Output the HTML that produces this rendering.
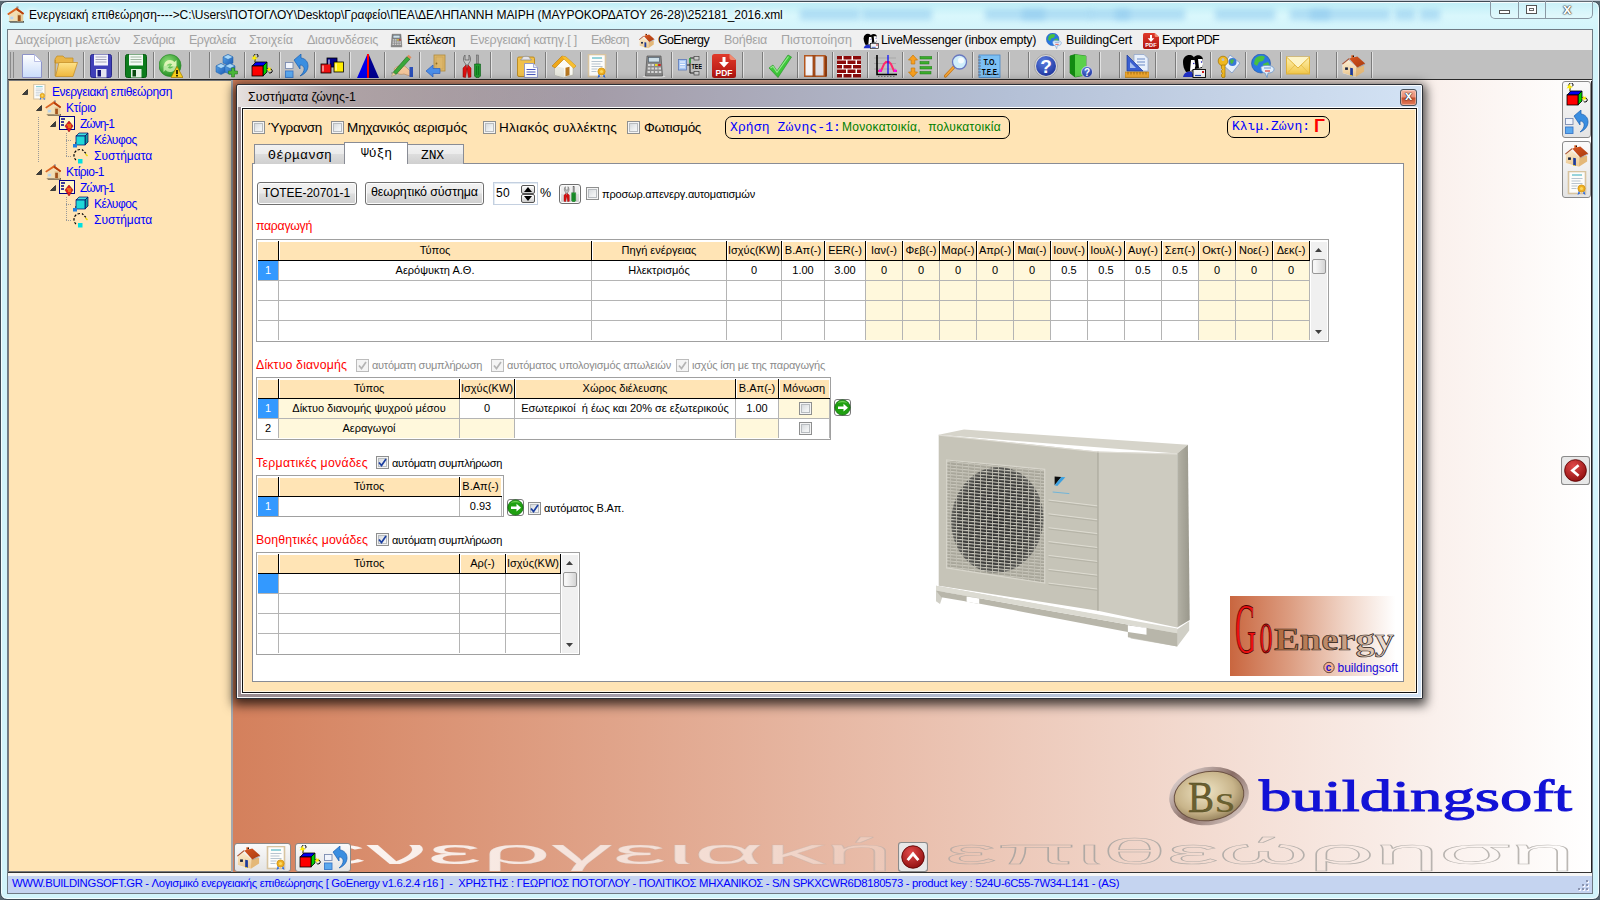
<!DOCTYPE html>
<html lang="el"><head><meta charset="utf-8"><title>Ενεργειακή επιθεώρηση</title>
<style>html,body{margin:0;padding:0}
body{width:1600px;height:900px;position:relative;overflow:hidden;background:#5a6872;font-family:"Liberation Sans",sans-serif;font-size:12px;color:#000;line-height:1}
.a,.a *{position:absolute;box-sizing:border-box}
.t{white-space:pre;line-height:1}
.sep{top:52px;width:1px;height:26px;background:#7c7c7c;box-shadow:1px 0 0 #e2e2e2}
.cb{width:13px;height:13px;border:1px solid #8e8f8f;background:linear-gradient(135deg,#cdd1d5 0%,#eef0f1 60%,#fafafa 100%);box-shadow:inset 0 0 0 1px #f4f4f4,inset 0 0 0 2px #b8bcc0}
.cbd{width:13px;height:13px;border:1px solid #bcbcbc;background:#f4f4f4}
.btn{border:1px solid #707070;border-radius:3px;background:linear-gradient(#f2f2f2 0%,#ebebeb 48%,#dddddd 52%,#cfcfcf 100%);box-shadow:inset 0 0 0 1px #fcfcfc}
.tbl{border:1px solid #a0a0a0;background:#fff}
</style></head><body>
<svg class="a" width="0" height="0" style="left:0;top:0"><defs>
<linearGradient id="gdoc" x1="0" y1="0" x2="0" y2="1"><stop offset="0" stop-color="#fff"/><stop offset="1" stop-color="#c9dcfa"/></linearGradient>
<linearGradient id="gfold" x1="0" y1="0" x2="0" y2="1"><stop offset="0" stop-color="#fde28a"/><stop offset="1" stop-color="#f0b73c"/></linearGradient>
<radialGradient id="ggreen" cx=".4" cy=".35" r=".7"><stop offset="0" stop-color="#8fe07a"/><stop offset="1" stop-color="#1e8a1e"/></radialGradient>
<radialGradient id="gblue" cx=".4" cy=".3" r=".8"><stop offset="0" stop-color="#5a7ee0"/><stop offset="1" stop-color="#1a2f9a"/></radialGradient>
<radialGradient id="gred" cx=".4" cy=".3" r=".8"><stop offset="0" stop-color="#e04a4a"/><stop offset="1" stop-color="#8a0a0a"/></radialGradient>
<linearGradient id="gcube" x1="0" y1="0" x2="1" y2="1"><stop offset="0" stop-color="#5aa8ec"/><stop offset="1" stop-color="#1a58b0"/></linearGradient>
<linearGradient id="gmail" x1="0" y1="0" x2="0" y2="1"><stop offset="0" stop-color="#fdf0b0"/><stop offset="1" stop-color="#f2c84a"/></linearGradient>
<linearGradient id="gpdf" x1="0" y1="0" x2="0" y2="1"><stop offset="0" stop-color="#e03a2a"/><stop offset="1" stop-color="#b01410"/></linearGradient>
<symbol id="i-new" viewBox="0 0 24 24"><path d="M.5 .5h12l7 7v16h-19z" fill="url(#gdoc)" stroke="#8d93c8"/><path d="M12.500 .5v7h7z" fill="#fff" stroke="#a9b0dd" stroke-width=".8"/></symbol>
<symbol id="i-open" viewBox="0 0 24 24"><path d="M1 5l2-3h6l2 2h8v5H1z" fill="#e9b548" stroke="#c08a20" stroke-width=".7"/><path d="M1.500 22.500L5 8.500h18.500L19 22.500z" fill="url(#gfold)" stroke="#c8922a" stroke-width=".8"/><path d="M1.200 22V6" stroke="#c08a20" stroke-width=".9"/></symbol>
<symbol id="i-save" viewBox="0 0 24 24"><rect x="1.500" y=".5" width="21" height="23" rx="2" fill="#4040b8" stroke="#2a2a8a"/><rect x="5" y=".5" width="14" height="11" fill="#f4f4fb"/><path d="M6.500 3h11M6.500 5.500h11M6.500 8h11" stroke="#9a9ab0" stroke-width=".9"/><rect x="7" y="15" width="10.500" height="8.500" fill="#e4e4f0"/><rect x="8.500" y="16" width="3.500" height="6.500" fill="#15157a"/></symbol>
<symbol id="i-saveg" viewBox="0 0 24 24"><rect x="1.500" y=".5" width="21" height="23" rx="2" fill="#0c7c1c" stroke="#085a12"/><rect x="5" y=".5" width="14" height="11" fill="#f4fbf4"/><path d="M6.500 3h11M6.500 5.500h11M6.500 8h11" stroke="#9ab09a" stroke-width=".9"/><rect x="7" y="15" width="10.500" height="8.500" fill="#e4f0e4"/><rect x="8.500" y="16" width="3.500" height="6.500" fill="#0a4a10"/></symbol>
<symbol id="i-refresh" viewBox="0 0 24 24"><circle cx="11" cy="11.500" r="11" fill="url(#ggreen)" stroke="#2a8a2a" stroke-width=".7"/><path d="M5 12a6 6 0 0 1 10.500-4l2-2v6.500h-6.500l2.200-2.200A3.600 3.600 0 0 0 7.500 12z" fill="#e9f7c0" opacity=".9"/><path d="M17 12a6 6 0 0 1-10.500 4l-2 2v-6.500h6.500l-2.200 2.200A3.600 3.600 0 0 0 14.500 12z" fill="#c9efb0" opacity=".85"/><path d="M18 12.500l6 11H12z" fill="#f6cf1a" stroke="#a07a00" stroke-width=".7"/><path d="M18 16v4" stroke="#000" stroke-width="1.600"/><circle cx="18" cy="21.700" r=".9"/></symbol>
<symbol id="i-cubes" viewBox="0 0 24 24"><g stroke="#1f5fa8" stroke-width=".5"><path d="M8 3l5-2.500L18 3v6l-5 2.500L8 9z" fill="url(#gcube)"/><path d="M8 3l5 2.500L18 3l-5-2.500z" fill="#a9d8f8"/><path d="M1 12l5-2.500L11 12v6l-5 2.500L1 18z" fill="url(#gcube)"/><path d="M1 12l5 2.500L11 12l-5-2.500z" fill="#a9d8f8"/><path d="M10 12l5-2.500L20 12v6l-5 2.500L10 18z" fill="url(#gcube)"/><path d="M10 12l5 2.500L20 12l-5-2.500z" fill="#a9d8f8"/></g><path d="M17 14.500h3v-3h3v3h3v3h-3v3h-3v-3h-3z" transform="translate(-3.500,2.500)" fill="#4ab83a" stroke="#2a7a20" stroke-width=".6"/></symbol>
<symbol id="i-rgb" viewBox="0 0 24 24"><path d="M5 8.500V3.500a2 2 0 1 1 2 0" fill="none" stroke="#000" stroke-width="1"/><path d="M1 2l2.500 1L5 .5l.5 2.700L8 4l-2.500 1L5 7.500 4 5 1.500 5.500 3 3.500z" fill="#ffee00"/><path d="M2 12l4-4h11l-4 4z" fill="#0000ee" stroke="#000" stroke-width=".8"/><path d="M13 12l4-4v10l-4 4z" fill="#00d000" stroke="#000" stroke-width=".8"/><rect x="2" y="12" width="11" height="10" fill="#ff0000" stroke="#000" stroke-width=".8"/><path d="M17 15h3a2 2 0 1 1-1.500 3" fill="none" stroke="#000" stroke-width="1"/><path d="M18.500 12.500l1 1.500 1.800-.5-1 1.600 1.200 1.400-1.900-.2-.9 1.700-.5-1.900-1.800-.4 1.700-.9z" fill="#ffee00"/></symbol>
<symbol id="i-undo" viewBox="0 0 24 24"><rect x=".5" y="8.500" width="7.500" height="6" fill="#f0f4fc" stroke="#7a8cb0" stroke-width=".9"/><rect x=".5" y="17" width="7.500" height="6.500" fill="#5aa8ee" stroke="#3a78c8" stroke-width=".9"/><path d="M9 6l7-6v4c9 1 10 14-1 18 6-5 5-11 0-11v4z" fill="#3a8ee0" stroke="#1a5fb0" stroke-width=".7"/></symbol>
<symbol id="i-blocks" viewBox="0 0 24 24"><rect x="7" y="4" width="10" height="9" fill="#000088" stroke="#000" stroke-width=".8"/><rect x="1" y="10" width="10" height="9" fill="#ee1111" stroke="#000" stroke-width=".8"/><rect x="14" y="8" width="9.500" height="10" fill="#ffee00" stroke="#000" stroke-width=".8"/><path d="M3 11.500v6M9 5.500v5M16 9.500v7" stroke="#fff" stroke-width="1"/></symbol>
<symbol id="i-ablue" viewBox="0 0 24 24"><path d="M11 1L1 24h10z" fill="#0000ee"/><path d="M13 1l10 23H13z" fill="#000090"/><path d="M12 0v24" stroke="#ff0000" stroke-width="2"/></symbol>
<symbol id="i-pencil" viewBox="0 0 24 24"><path d="M1 19h14" stroke="#777" stroke-width=".8"/><path d="M4 15c3-3 8-5 12-2l4 4v5l-6-2c-4 1-8 0-10-5z" fill="#f2c69a" stroke="#b8885a" stroke-width=".6"/><rect x="19.500" y="13" width="3.500" height="10" fill="#2a4fb8"/><path d="M3 18.500L17 2.500l3 2.500L6 20.500z" fill="#3aa83a" stroke="#1a6a1a" stroke-width=".6"/><path d="M17 2.500l1.500-1.700 3 2.500-1.500 1.700z" fill="#e08a5a"/><path d="M3 18.500l-1.500 4 4.500-2z" fill="#f0d8a0" stroke="#886" stroke-width=".4"/></symbol>
<symbol id="i-door" viewBox="0 0 24 24"><rect x="9" y="1" width="11" height="16" fill="#dcb66a" stroke="#b08a3a" stroke-width=".8"/><rect x="11" y="3" width="7" height="12" fill="none" stroke="#c8a050" stroke-width=".6"/><circle cx="11.500" cy="9.500" r=".9" fill="#8a6a20"/><path d="M1 17l7-6v3.500h7v5H8V23z" fill="#4a8ee8" stroke="#2a5fc0" stroke-width=".7"/></symbol>
<symbol id="i-tools" viewBox="0 0 24 24"><path d="M5 1c-2 2-2 6 0 8l1 2h2l1-2c2-2 2-6 0-8v5H5z" fill="#c8c8c8" stroke="#555" stroke-width=".7"/><path d="M6 11l-3 3v9l2.500.5L7 15zM8 11l3 3v9l-2.500.5L7 15z" fill="#dd1111" stroke="#800" stroke-width=".5"/><rect x="16.500" y="1" width="2" height="9" fill="#999" stroke="#555" stroke-width=".5"/><path d="M14.500 10h6v12l-1.500 1.500h-3L14.500 22z" fill="#1e9a2e" stroke="#0a5a14" stroke-width=".6"/><path d="M16.500 12v9M18.500 12v9" stroke="#0a6a1a" stroke-width=".7"/></symbol>
<symbol id="i-clip" viewBox="0 0 24 24"><rect x="1.500" y="3" width="17" height="19.500" rx="1.500" fill="#f0c04a" stroke="#b8861a" stroke-width=".9"/><path d="M6 4.500c0-3 8-3 8 0l1.500 1.500h-11z" fill="#e4e4ea" stroke="#888" stroke-width=".7"/><path d="M8.500 9.500h9l4 4v10h-13z" fill="#fff" stroke="#8890c8" stroke-width=".9"/><path d="M17.500 9.500v4h4" fill="#e4e8fa" stroke="#8890c8" stroke-width=".7"/><path d="M10.500 15.500h9M10.500 18h9M10.500 20.500h9" stroke="#4a5ac0" stroke-width="1.100"/></symbol>
<symbol id="i-housey" viewBox="0 0 24 24"><path d="M3 12l9-8 9 8v9l-9 2.500L3 21z" fill="#fbfbf4" stroke="#b0b0a0" stroke-width=".6"/><path d="M12 14v9.500L3 21v-9z" fill="#e9e9df"/><path d="M0 12L10 2l4 1 10 9-2.500 2L12 5 3 14z" fill="#f0a818" stroke="#b87808" stroke-width=".6"/><path d="M10 2l4 1 10 9-2.500 2L12 5z" fill="#f8c030"/><rect x="13.500" y="13" width="4" height="8.500" fill="#b87820" transform="skewY(-14) translate(0,4)"/></symbol>
<symbol id="i-cert" viewBox="0 0 24 24"><rect x="2.500" y=".5" width="17" height="22" fill="#fdfdfb" stroke="#d8c4a0" stroke-width="1.600"/><path d="M6 4h10" stroke="#3ab" stroke-width="1"/><path d="M5.500 7.500h11M5.500 10h9M5.500 12.500h11M5.500 15h6M5.500 17.500h5" stroke="#9ab" stroke-width=".7"/><path d="M13 19l-1.500 5 2.500-1.500zM18 19l1.500 5-2.500-1.500z" fill="#2a6ae0"/><circle cx="15.500" cy="17.500" r="3.600" fill="#f0b020" stroke="#c88a08" stroke-width=".7"/><circle cx="15.500" cy="17.500" r="1.600" fill="#fbd860"/></symbol>
<symbol id="i-calc" viewBox="0 0 24 24"><ellipse cx="12" cy="22.500" rx="11.500" ry="1.500" fill="#e8e8e8"/><path d="M5 2h14l1.500 20h-17z" fill="#8a8a8a" stroke="#555" stroke-width=".7"/><rect x="6.500" y="3.500" width="11" height="4.500" fill="#cfe0e8" stroke="#456" stroke-width=".6"/><g fill="#d8d8d8"><rect x="6" y="10" width="2.500" height="2"/><rect x="9.500" y="10" width="2.500" height="2"/><rect x="13" y="10" width="2.500" height="2" fill="#e8d820"/><rect x="16.200" y="10" width="2.500" height="2" fill="#d82020"/><rect x="5.800" y="13.500" width="2.500" height="2"/><rect x="9.400" y="13.500" width="2.500" height="2"/><rect x="13" y="13.500" width="2.500" height="2"/><rect x="16.500" y="13.500" width="2.500" height="2"/><rect x="5.500" y="17" width="2.500" height="2"/><rect x="9.200" y="17" width="2.500" height="2"/><rect x="13" y="17" width="2.500" height="2"/><rect x="16.800" y="17" width="2.500" height="2"/></g></symbol>
<symbol id="i-treetee" viewBox="0 0 24 24"><rect x=".5" y="5.500" width="8" height="10.500" fill="#a9c8f4" stroke="#5a78b8" stroke-width=".8"/><path d="M2 8h5M2 10.500h5M2 13h5" stroke="#fff" stroke-width=".9"/><path d="M9 11h3M12 4v15M12 4h4M12 19h4" stroke="#222" stroke-width="1.100" fill="none"/><path d="M12 4v5" stroke="#2ab83a" stroke-width="1.300"/><rect x="16" y="2.500" width="5" height="3.500" fill="#ccc" stroke="#444" stroke-width=".7"/><rect x="16" y="17.500" width="5" height="3.500" fill="#ccc" stroke="#444" stroke-width=".7"/><text x="13.500" y="14.800" font-family="Liberation Sans,sans-serif" font-size="7.500" font-weight="bold" textLength="10.500" lengthAdjust="spacingAndGlyphs">TEE</text></symbol>
<symbol id="i-pdf" viewBox="0 0 24 24"><path d="M2.500 0h15l6.500 6v15.500a2.500 2.500 0 0 1-2.500 2.500h-19A2.500 2.500 0 0 1 0 21.500v-19A2.500 2.500 0 0 1 2.500 0z" fill="url(#gpdf)"/><path d="M17.500 0v4a2 2 0 0 0 2 2H24z" fill="#f08a70"/><path d="M10.500 3h3v5h3.500l-5 5.500L7 8h3.500z" fill="#fff"/><text x="12" y="21.500" text-anchor="middle" font-family="Liberation Sans,sans-serif" font-size="8.500" font-weight="bold" fill="#fff" textLength="17" lengthAdjust="spacingAndGlyphs">PDF</text></symbol>
<symbol id="i-check" viewBox="0 0 24 24"><path d="M1 14l4-3 4 6L20 1l3.500 2L10 23.500z" fill="#3ec83a" stroke="#2a9a2a" stroke-width=".7"/><path d="M2.500 14l2.500-1.700 4 6L20.500 2.500" fill="none" stroke="#a8f0a0" stroke-width="1.200" opacity=".8"/></symbol>
<symbol id="i-window" viewBox="0 0 24 24"><rect x="1" y="1" width="21" height="22" fill="#b4561e"/><rect x="2.500" y="2.500" width="7.500" height="19" fill="#f4f4f8"/><rect x="12" y="2.500" width="8.500" height="19" fill="#e0e0e6"/><path d="M10 1v22M12 1v22" stroke="#8a3a10" stroke-width=".8"/><path d="M22 1l2 1.500v20L22 23z" fill="#8a3a10"/></symbol>
<symbol id="i-brick" viewBox="0 0 24 24"><rect x="0" y="2" width="24" height="21.500" fill="#fff"/><g fill="#8a0a0a"><rect x="0" y="2" width="5" height="3.500"/><rect x="6.500" y="2" width="8" height="3.500"/><rect x="16" y="2" width="8" height="3.500"/><rect x="0" y="6.500" width="9" height="3.500"/><rect x="10.500" y="6.500" width="8" height="3.500"/><rect x="20" y="6.500" width="4" height="3.500"/><rect x="0" y="11" width="5" height="3.500"/><rect x="6.500" y="11" width="8" height="3.500"/><rect x="16" y="11" width="8" height="3.500"/><rect x="0" y="15.500" width="9" height="3.500"/><rect x="10.500" y="15.500" width="8" height="3.500"/><rect x="20" y="15.500" width="4" height="3.500"/><rect x="0" y="20" width="5" height="3.500"/><rect x="6.500" y="20" width="8" height="3.500"/><rect x="16" y="20" width="8" height="3.500"/></g></symbol>
<symbol id="i-chart" viewBox="0 0 24 24"><path d="M1 4h22M1 9.500h22M1 15h22" stroke="#999" stroke-width=".6"/><path d="M4 1v19.500h20" fill="none" stroke="#000" stroke-width="1.600"/><path d="M5 22.500h18" stroke="#777" stroke-width="1" stroke-dasharray="1.500 1.500"/><path d="M5 17h3l3-7 2-2h3l2 2 3 7h3" fill="none" stroke="#ff2a6a" stroke-width="2"/><path d="M15 1v19" stroke="#0000ff" stroke-width="1.200"/><rect x="6" y="15.500" width="2.500" height="2.500" fill="#f0f"/><rect x="21" y="15.500" width="2.500" height="2.500" fill="#f0f"/></symbol>
<symbol id="i-list" viewBox="0 0 24 24"><path d="M5 1l4.500 5h-2.700v4H3.200V6H.5zM5 23l4.500-5h-2.700v-4H3.200v4H.5z" fill="#f8a020" stroke="#c87808" stroke-width=".7"/><g fill="#3cae2c" stroke="#1a7a14" stroke-width=".5"><rect x="12" y="2.500" width="12" height="2.500"/><rect x="12" y="7.500" width="9" height="2.500"/><rect x="12" y="12.500" width="12" height="2.500"/><rect x="12" y="17.500" width="11" height="2.500"/></g></symbol>
<symbol id="i-mag" viewBox="0 0 24 24"><path d="M9.500 13.500L1.500 22" stroke="#c87818" stroke-width="3.200" stroke-linecap="round"/><path d="M9.500 13.500L1.500 22" stroke="#f8a838" stroke-width="1.600" stroke-linecap="round"/><circle cx="15.500" cy="8" r="7" fill="#cfeefb" stroke="#6878c0" stroke-width="1.300"/><circle cx="17" cy="6.500" r="3" fill="#fff" opacity=".8"/></symbol>
<symbol id="i-totee" viewBox="0 0 24 24"><rect x="2" y="1" width="21" height="22.500" fill="#7cc0f4" stroke="#4a88c8" stroke-width=".8"/><path d="M1 3h3M1 6h3M1 9h3M1 12h3M1 15h3M1 18h3M1 21h3" stroke="#667" stroke-width=".8"/><text x="13" y="11" text-anchor="middle" font-family="Liberation Sans,sans-serif" font-size="9" font-weight="bold" textLength="13" lengthAdjust="spacingAndGlyphs">T.O.</text><text x="13.300" y="21" text-anchor="middle" font-family="Liberation Sans,sans-serif" font-size="9" font-weight="bold" textLength="17" lengthAdjust="spacingAndGlyphs">T.E.E.</text></symbol>
<symbol id="i-help" viewBox="0 0 24 24"><circle cx="12" cy="12" r="11.500" fill="#d8d8d8" stroke="#888" stroke-width=".6"/><circle cx="12" cy="12" r="10" fill="url(#gblue)"/><text x="12" y="19" text-anchor="middle" font-family="Liberation Sans,sans-serif" font-size="19" font-weight="bold" fill="#fff">?</text></symbol>
<symbol id="i-book" viewBox="0 0 24 24"><path d="M1 2l5-1.500L17 2v19l-11 2-5-4z" fill="#2aa02a" stroke="#0a6a0a" stroke-width=".6"/><path d="M6 .5L17 2v19L6 23z" fill="#5ad04a"/><path d="M1 2l5-1.500V23l-5-4z" fill="#128a12"/><circle cx="18" cy="18" r="5.500" fill="url(#gblue)" stroke="#dde" stroke-width=".8"/><text x="18" y="21.800" text-anchor="middle" font-family="Liberation Sans,sans-serif" font-size="10" font-weight="bold" fill="#fff">?</text></symbol>
<symbol id="i-ruler" viewBox="0 0 24 24"><path d="M9 .5h10l4 4V17H9z" fill="#e8f0fb" stroke="#8aa0c8" stroke-width=".7"/><path d="M12 5h8M12 8h8M12 11h8" stroke="#6a8ac8" stroke-width="1.100"/><path d="M2 1v16h16z" fill="#3a5fd0" stroke="#1a3a9a" stroke-width=".7"/><path d="M5 8v6h6z" fill="#a8c0f0"/><rect x="0" y="18" width="24" height="5.500" fill="#f0a830" stroke="#b87808" stroke-width=".6"/><path d="M3 18v2.500M6 18v2.500M9 18v2.500M12 18v2.500M15 18v2.500M18 18v2.500M21 18v2.500" stroke="#7a4a00" stroke-width=".6"/></symbol>
<symbol id="i-people" viewBox="0 0 24 24"><path d="M12 3c3-3 9-2 9 3l-1 8-7 1z" fill="#000"/><path d="M16 5h4.500l.5 5-1 3-3 1z" fill="#fff"/><path d="M1 8c0-9 12-9 12-1l-1 10-8 1c-2-3-3-6-3-10z" fill="#000"/><path d="M9 6h3.500l1 6-1.500 4-4 1z" fill="#fff"/><circle cx="11.800" cy="9.500" r=".7" fill="#00a"/><circle cx="19.500" cy="8" r=".7" fill="#00a"/><path d="M1 23c1-5 5-6 9-5l2 5z" fill="#2030c8"/><rect x="11" y="15.500" width="12.500" height="8" fill="#f4f4f4" stroke="#000" stroke-width=".9"/><rect x="20" y="17" width="2" height="2" fill="#d02020"/><path d="M13 21.500h6" stroke="#2a4ac0" stroke-width="1.200"/></symbol>
<symbol id="i-keys" viewBox="0 0 24 24"><path d="M13 1l10 8-8 10-9-8z" fill="#e8f0fa" stroke="#7a98c8" stroke-width=".8"/><circle cx="15.500" cy="8" r="4" fill="#3a78d8"/><path d="M13 7c1-2 3-2 4-1l-1 3-2 1z" fill="#48b848"/><circle cx="6" cy="7" r="4.800" fill="#f0b820" stroke="#a87808" stroke-width=".8"/><circle cx="6" cy="5.500" r="1.500" fill="#c0c0c0"/><path d="M4.500 11h3.500v12l-2 1-1.500-1.500v-2l1-1-1-1.500v-1.500l1-1-1-1z" fill="#f0b820" stroke="#a87808" stroke-width=".7"/></symbol>
<symbol id="i-globe" viewBox="0 0 24 24"><circle cx="10" cy="9.500" r="9.500" fill="#2a78e0" stroke="#1a4fa8" stroke-width=".6"/><path d="M4 5c3-4 8-4 10-2l-2 4-4 1-2 4-3-2zM12 10l5-2 2 4-3 5-3-2z" fill="#48c040"/><path d="M10 13.500c0-3 13-3 13 1.500 0 3-3 4-6 4l-1 4.500-2-4.500c-2 0-4-2-4-5.500z" fill="#e4f0fb" stroke="#6a98d0" stroke-width=".8"/><path d="M13 14h7" stroke="#8aa8d8" stroke-width="1.300"/><path d="M14 17h5" stroke="#e03a2a" stroke-width="1.200"/></symbol>
<symbol id="i-mail" viewBox="0 0 24 24"><rect x=".5" y="3" width="23" height="17" fill="url(#gmail)" stroke="#e0b030" stroke-width=".9"/><path d="M.5 20L9 11M23.500 20L15 11" stroke="#e8c050" stroke-width="1"/><path d="M.5 3L12 14 23.500 3" fill="#fdf4c8" stroke="#e0b030" stroke-width=".9"/></symbol>
<symbol id="i-house" viewBox="0 0 24 24"><defs><linearGradient id="ghr" x1="0" y1="0" x2="1" y2="1"><stop offset="0" stop-color="#d85420"/><stop offset="1" stop-color="#a83c10"/></linearGradient><linearGradient id="ghw" x1="0" y1="0" x2="0" y2="1"><stop offset="0" stop-color="#fbecd0"/><stop offset="1" stop-color="#ecc890"/></linearGradient></defs><path d="M.3 10.400L6.100 5.800l8.200 7.300-.4 9.900L.8 19.300z" fill="#fff" opacity=".7"/><path d="M.8 10.200L6.100 6.300l8.200 6.800-.4 9.600L.8 19.100z" fill="url(#ghw)"/><path d="M14.300 13.100l7.800-1.400v5.700l-8.200 5.300z" fill="#e4b878"/><rect x="9.300" y="1.300" width="2.500" height="2.600" fill="#e06020"/><rect x="10.800" y="1.600" width="1.200" height="1.400" fill="#111"/><path d="M7.200 4.500l8.100-2.100 7.900 7.100-7.900 3.900z" fill="url(#ghr)"/><path d="M0 9.700L6.700 4.300l.9.600-6.900 5.600z" fill="#a85030"/><path d="M15.300 13.400l7.900-3.900v.9l-7.900 3.900z" fill="#8a90a0" opacity=".7"/><rect x="3.100" y="13.400" width="2.800" height="2.500" fill="#1a2440"/><path d="M8.200 13.800l2.700.5v7.400l-2.700-.8z" fill="#1c3c9c"/><rect x="8.100" y="21" width="1.800" height=".9" fill="#f0d020"/></symbol>
<symbol id="i-home" viewBox="0 0 16 16"><defs><linearGradient id="ghm" x1="0" y1="0" x2="1" y2="1"><stop offset="0" stop-color="#f08030"/><stop offset="1" stop-color="#c03c0c"/></linearGradient></defs><rect x="9" y=".4" width="1.800" height="2.200" fill="#8a8a90"/><path d="M1.500 14.300h14.500v1.200H3z" fill="#201810"/><path d="M2 7.400L8.800 2.600l6.400 4.300v7.500H2z" fill="#f2deb4"/><path d="M9.500 7h5.700v7.400H9.500z" fill="#e8cc98"/><rect x="10.200" y="8.700" width="2.700" height="5.500" fill="#a0521c"/><rect x="2.900" y="9.800" width="3.200" height="2.700" fill="#b8d4ec" stroke="#e8e0d0" stroke-width=".5"/><path d="M.2 7.300L8.800 1.300l7.300 5.500-1 1.200-6.300-4.300-7.600 4.900z" fill="url(#ghm)"/><path d="M8.800 1.300l7.300 5.500-1 1.200-6.300-4.300z" fill="#b8400c"/></symbol>
<symbol id="i-go" viewBox="0 0 17 17"><rect x=".5" y=".5" width="16" height="16" rx="2.500" fill="#fff" stroke="#7a7a7a"/><circle cx="8.500" cy="8.500" r="7.600" fill="#1fa010" stroke="#0a6a08" stroke-width=".8"/><path d="M3.200 4.500a6.500 6.500 0 0 1 10.600 0a9 6 0 0 0-10.600 0z" fill="#7ed860" opacity=".8"/><path d="M4 7.500h5.500V4.800l4.500 3.900-4.500 3.900V10H4z" fill="#fff"/></symbol>
<symbol id="i-redup" viewBox="0 0 28 28"><rect x=".5" y=".5" width="27" height="27" rx="2.500" fill="#e8e8e8" stroke="#8a8a8a"/><circle cx="14" cy="14" r="10.500" fill="url(#gred)" stroke="#5a0000" stroke-width=".8"/><path d="M9 17l5-6 5 6" fill="none" stroke="#fff" stroke-width="2.600"/></symbol>
<symbol id="i-redleft" viewBox="0 0 28 28"><rect x=".5" y=".5" width="27" height="27" rx="2.500" fill="#e8e8e8" stroke="#8a8a8a"/><circle cx="14" cy="14" r="10.500" fill="url(#gred)" stroke="#5a0000" stroke-width=".8"/><path d="M17 9l-6 5 6 5" fill="none" stroke="#fff" stroke-width="2.600"/></symbol>
<symbol id="i-zone" viewBox="0 0 16 16"><rect x=".5" y=".5" width="15" height="13" fill="#fff8c8" stroke="#000088" stroke-width="1"/><path d="M2 3h4M2 6h3M2 9h3" stroke="#000088" stroke-width="1.400"/><path d="M10 5l4 5-4 6-4-6z" fill="#e02020" stroke="#800" stroke-width=".5"/><path d="M8 9h4M9 11h3" stroke="#ff0" stroke-width=".7"/></symbol>
<symbol id="i-shell" viewBox="0 0 16 16"><path d="M2 11h10l3-2" stroke="#000" stroke-width="1.200" fill="none"/><path d="M3 4l3-3h9l-3 3z" fill="#40e0e0" stroke="#006" stroke-width=".7"/><path d="M12 4l3-3v9l-3 3z" fill="#10a0a0" stroke="#006" stroke-width=".7"/><rect x="3" y="4" width="9" height="9" fill="#20d8d8" stroke="#006" stroke-width=".7"/><rect x="0" y="12" width="4" height="3.500" fill="#2080e0"/></symbol>
<symbol id="i-sys" viewBox="0 0 16 16"><path d="M7 1.500A6 6 0 0 0 3 12" fill="none" stroke="#000" stroke-width="1.200" stroke-dasharray="2.500 1.500"/><path d="M9 1.500l4 4" stroke="#000" stroke-width="1.200" stroke-dasharray="2 1.500"/><path d="M12.500 6l2 2" stroke="#e8d800" stroke-width="1.500"/><rect x="5" y="11" width="4.500" height="4.500" fill="#00e0e0"/></symbol>
</defs></svg>

<div class="a" id="frame" style="left:0;top:1px;width:1600px;height:899px;border-radius:7px;border:1px solid #3f4a55;background:linear-gradient(#bfeef7 0px,#d9f7fc 14px,#d2f4fb 30px,#d2f4fb 100%);box-shadow:inset 0 0 0 1px #f4fdff"></div>
<div class="a" style="left:0;top:0;width:1600px;height:1px;background:#c4ccd6"></div>
<div class="a" style="left:800px;top:9px;width:60px;height:11px;background:#8cc8ee;opacity:.55;filter:blur(3px)"></div><div class="a" style="left:862px;top:9px;width:70px;height:11px;background:#8cc8ee;opacity:.55;filter:blur(3px)"></div><div class="a" style="left:985px;top:9px;width:60px;height:11px;background:#8cc8ee;opacity:.55;filter:blur(3px)"></div><div class="a" style="left:1022px;top:9px;width:70px;height:11px;background:#8cc8ee;opacity:.55;filter:blur(3px)"></div><div class="a" style="left:1090px;top:9px;width:40px;height:11px;background:#8cc8ee;opacity:.55;filter:blur(3px)"></div><div class="a" style="left:1115px;top:9px;width:70px;height:11px;background:#8cc8ee;opacity:.55;filter:blur(3px)"></div><div class="a" style="left:1215px;top:9px;width:60px;height:11px;background:#8cc8ee;opacity:.55;filter:blur(3px)"></div><div class="a" style="left:1290px;top:9px;width:40px;height:11px;background:#8cc8ee;opacity:.55;filter:blur(3px)"></div><div class="a" style="left:1310px;top:9px;width:80px;height:11px;background:#8cc8ee;opacity:.55;filter:blur(3px)"></div><div class="a" style="left:1395px;top:9px;width:20px;height:11px;background:#8cc8ee;opacity:.55;filter:blur(3px)"></div><div class="a" style="left:1420px;top:9px;width:20px;height:11px;background:#8cc8ee;opacity:.55;filter:blur(3px)"></div>
<svg class="a" style="left:7px;top:6px" width="17" height="17"><use href="#i-home"/></svg>
<div class="a" style="left:0;top:0;width:0;height:0"><div class="t" style="left:29px;top:9px;font-size:12px;color:#000;letter-spacing:-0.03px;text-shadow:0 0 6px #fff,0 0 4px #fff;">Ενεργειακή επιθεώρηση----&gt;C:\Users\ΠΟΤΟΓΛΟΥ\Desktop\Γραφείο\ΠΕΑ\ΔΕΛΗΠΑΝΝΗ ΜΑΙΡΗ (ΜΑΥΡΟΚΟΡΔΑΤΟΥ 26-28)\252181_2016.xml</div></div>
<div class="a" style="left:1490px;top:1px;width:103px;height:18px;border:1px solid #8a98a4;border-top:none;border-radius:0 0 5px 5px;background:rgba(255,255,255,.18)"><div style="left:27px;top:0;width:1px;height:17px;background:#8a98a4"></div><div style="left:54px;top:0;width:1px;height:17px;background:#8a98a4"></div><div style="left:8px;top:9px;width:11px;height:4px;border:1px solid #555;background:#fff"></div><div style="left:35px;top:4px;width:11px;height:9px;border:1px solid #555;background:#fff;box-shadow:inset 0 0 0 2px #fff, inset 0 0 0 3px #666"></div><div class="t" style="left:72px;top:0px;font-size:15px;font-weight:bold;color:#fff;text-shadow:0 0 1px #333,0 0 1px #333,0 0 2px #333">x</div></div>
<div class="a" style="left:7px;top:29px;width:1586px;height:865px;border:1px solid #6f7a84;background:#f0f0f0"></div>
<div class="a" id="menu" style="left:8px;top:30px;width:1584px;height:20px;background:#f0f0f0">
<div class="t" style="left:7px;top:4px;font-size:12.5px;color:#a3a3a3;letter-spacing:-0.09px;">Διαχείριση μελετών</div>
<div class="t" style="left:125px;top:4px;font-size:12.5px;color:#a3a3a3;letter-spacing:-0.27px;">Σενάρια</div>
<div class="t" style="left:181px;top:4px;font-size:12.5px;color:#a3a3a3;letter-spacing:-0.47px;">Εργαλεία</div>
<div class="t" style="left:241px;top:4px;font-size:12.5px;color:#a3a3a3;letter-spacing:0.03px;">Στοιχεία</div>
<div class="t" style="left:299px;top:4px;font-size:12.5px;color:#a3a3a3;letter-spacing:-0.23px;">Διασυνδέσεις</div>
<div class="t" style="left:399px;top:4px;font-size:12.5px;color:#000;letter-spacing:-0.45px;">Εκτέλεση</div>
<div class="t" style="left:462px;top:4px;font-size:12.5px;color:#a3a3a3;letter-spacing:-0.21px;">Ενεργειακή κατηγ.[ ]</div>
<div class="t" style="left:583px;top:4px;font-size:12.5px;color:#a3a3a3;letter-spacing:-0.61px;">Εκθεση</div>
<div class="t" style="left:650px;top:4px;font-size:12.5px;color:#000;letter-spacing:-0.66px;">GoEnergy</div>
<div class="t" style="left:716px;top:4px;font-size:12.5px;color:#a3a3a3;letter-spacing:-0.25px;">Βοήθεια</div>
<div class="t" style="left:773px;top:4px;font-size:12.5px;color:#a3a3a3;">Πιστοποίηση</div>
<div class="t" style="left:873px;top:4px;font-size:12.5px;color:#000;letter-spacing:-0.33px;">LiveMessenger (inbox empty)</div>
<div class="t" style="left:1058px;top:4px;font-size:12.5px;color:#000;letter-spacing:-0.17px;">BuildingCert</div>
<div class="t" style="left:1154px;top:4px;font-size:12.5px;color:#000;letter-spacing:-0.76px;">Export PDF</div>
<svg style="left:381px;top:3px" width="15" height="15"><use href="#i-calc"/></svg>
<svg style="left:631px;top:3px" width="16" height="16"><use href="#i-house"/></svg>
<svg style="left:855px;top:3px" width="16" height="16"><use href="#i-people"/></svg>
<svg style="left:1038px;top:3px" width="16" height="16"><use href="#i-globe"/></svg>
<svg style="left:1135px;top:3px" width="16" height="16"><use href="#i-pdf"/></svg>
</div>
<div class="a" id="tb" style="left:8px;top:50px;width:1584px;height:30px;background:#c0c0c0">
<div style="left:2px;top:2px;width:1px;height:26px;background:#8a8a8a"></div><div style="left:5px;top:2px;width:1px;height:26px;background:#8a8a8a"></div>
<div class="sep" style="left:40px;top:2px"></div>
<div class="sep" style="left:75px;top:2px"></div>
<div class="sep" style="left:110px;top:2px"></div>
<div class="sep" style="left:145px;top:2px"></div>
<div class="sep" style="left:181px;top:2px"></div>
<div class="sep" style="left:201px;top:2px"></div>
<div class="sep" style="left:236px;top:2px"></div>
<div class="sep" style="left:271px;top:2px"></div>
<div class="sep" style="left:306px;top:2px"></div>
<div class="sep" style="left:341px;top:2px"></div>
<div class="sep" style="left:376px;top:2px"></div>
<div class="sep" style="left:411px;top:2px"></div>
<div class="sep" style="left:446px;top:2px"></div>
<div class="sep" style="left:482px;top:2px"></div>
<div class="sep" style="left:502px;top:2px"></div>
<div class="sep" style="left:537px;top:2px"></div>
<div class="sep" style="left:572px;top:2px"></div>
<div class="sep" style="left:608px;top:2px"></div>
<div class="sep" style="left:628px;top:2px"></div>
<div class="sep" style="left:663px;top:2px"></div>
<div class="sep" style="left:698px;top:2px"></div>
<div class="sep" style="left:734px;top:2px"></div>
<div class="sep" style="left:754px;top:2px"></div>
<div class="sep" style="left:789px;top:2px"></div>
<div class="sep" style="left:824px;top:2px"></div>
<div class="sep" style="left:859px;top:2px"></div>
<div class="sep" style="left:894px;top:2px"></div>
<div class="sep" style="left:929px;top:2px"></div>
<div class="sep" style="left:964px;top:2px"></div>
<div class="sep" style="left:1000px;top:2px"></div>
<div class="sep" style="left:1020px;top:2px"></div>
<div class="sep" style="left:1055px;top:2px"></div>
<div class="sep" style="left:1091px;top:2px"></div>
<div class="sep" style="left:1111px;top:2px"></div>
<div class="sep" style="left:1147px;top:2px"></div>
<div class="sep" style="left:1167px;top:2px"></div>
<div class="sep" style="left:1202px;top:2px"></div>
<div class="sep" style="left:1237px;top:2px"></div>
<div class="sep" style="left:1272px;top:2px"></div>
<div class="sep" style="left:1308px;top:2px"></div>
<div class="sep" style="left:1328px;top:2px"></div>
<div class="sep" style="left:1363px;top:2px"></div>
<svg style="left:14px;top:4px" width="24" height="24"><use href="#i-new"/></svg>
<svg style="left:46px;top:4px" width="24" height="24"><use href="#i-open"/></svg>
<svg style="left:81px;top:4px" width="24" height="24"><use href="#i-save"/></svg>
<svg style="left:116px;top:4px" width="24" height="24"><use href="#i-saveg"/></svg>
<svg style="left:151px;top:4px" width="24" height="24"><use href="#i-refresh"/></svg>
<svg style="left:207px;top:4px" width="24" height="24"><use href="#i-cubes"/></svg>
<svg style="left:242px;top:4px" width="24" height="24"><use href="#i-rgb"/></svg>
<svg style="left:277px;top:4px" width="24" height="24"><use href="#i-undo"/></svg>
<svg style="left:312px;top:4px" width="24" height="24"><use href="#i-blocks"/></svg>
<svg style="left:348px;top:4px" width="24" height="24"><use href="#i-ablue"/></svg>
<svg style="left:382px;top:4px" width="24" height="24"><use href="#i-pencil"/></svg>
<svg style="left:417px;top:4px" width="24" height="24"><use href="#i-door"/></svg>
<svg style="left:452px;top:4px" width="24" height="24"><use href="#i-tools"/></svg>
<svg style="left:508px;top:4px" width="24" height="24"><use href="#i-clip"/></svg>
<svg style="left:544px;top:4px" width="24" height="24"><use href="#i-housey"/></svg>
<svg style="left:578px;top:4px" width="24" height="24"><use href="#i-cert"/></svg>
<svg style="left:634px;top:4px" width="24" height="24"><use href="#i-calc"/></svg>
<svg style="left:670px;top:4px" width="24" height="24"><use href="#i-treetee"/></svg>
<svg style="left:704px;top:4px" width="24" height="24"><use href="#i-pdf"/></svg>
<svg style="left:760px;top:4px" width="24" height="24"><use href="#i-check"/></svg>
<svg style="left:795px;top:4px" width="24" height="24"><use href="#i-window"/></svg>
<svg style="left:829px;top:4px" width="24" height="24"><use href="#i-brick"/></svg>
<svg style="left:865px;top:4px" width="24" height="24"><use href="#i-chart"/></svg>
<svg style="left:900px;top:4px" width="24" height="24"><use href="#i-list"/></svg>
<svg style="left:936px;top:4px" width="24" height="24"><use href="#i-mag"/></svg>
<svg style="left:969px;top:4px" width="24" height="24"><use href="#i-totee"/></svg>
<svg style="left:1026px;top:4px" width="24" height="24"><use href="#i-help"/></svg>
<svg style="left:1061px;top:4px" width="24" height="24"><use href="#i-book"/></svg>
<svg style="left:1117px;top:4px" width="24" height="24"><use href="#i-ruler"/></svg>
<svg style="left:1174px;top:4px" width="24" height="24"><use href="#i-people"/></svg>
<svg style="left:1209px;top:4px" width="24" height="24"><use href="#i-keys"/></svg>
<svg style="left:1243px;top:4px" width="24" height="24"><use href="#i-globe"/></svg>
<svg style="left:1278px;top:4px" width="24" height="24"><use href="#i-mail"/></svg>
<svg style="left:1334px;top:4px" width="24" height="24"><use href="#i-house"/></svg>
</div>
<div class="a" style="left:8px;top:79px;width:1584px;height:1px;background:#2a2a2a"></div>
<div class="a" id="tree" style="left:8px;top:80px;width:223px;height:792px;background:#ffe4b5;border:1px solid #7a7a7a;border-right:none">
<div class="t" style="left:43px;top:5px;font-size:12px;color:#0000ff;letter-spacing:-0.40px;">Ενεργειακή επιθεώρηση</div>
<svg style="left:23px;top:3px" width="16" height="16"><use href="#i-cert"/></svg>
<svg style="left:13px;top:8px" width="6" height="6"><path d="M5.500 .5v5h-5z" fill="#404040" stroke="#262626" stroke-width=".8"/></svg>
<div class="t" style="left:57px;top:21px;font-size:12px;color:#0000ff;letter-spacing:-0.26px;">Κτίριο</div>
<svg style="left:36px;top:19px" width="16" height="16"><use href="#i-home"/></svg>
<svg style="left:27px;top:24px" width="6" height="6"><path d="M5.500 .5v5h-5z" fill="#404040" stroke="#262626" stroke-width=".8"/></svg>
<div class="t" style="left:71px;top:37px;font-size:12px;color:#0000ff;letter-spacing:-1.01px;">Ζώνη-1</div>
<svg style="left:50px;top:35px" width="16" height="16"><use href="#i-zone"/></svg>
<svg style="left:41px;top:40px" width="6" height="6"><path d="M5.500 .5v5h-5z" fill="#404040" stroke="#262626" stroke-width=".8"/></svg>
<div class="t" style="left:85px;top:53px;font-size:12px;color:#0000ff;letter-spacing:-0.41px;">Κέλυφος</div>
<svg style="left:64px;top:51px" width="16" height="16"><use href="#i-shell"/></svg>
<div class="t" style="left:85px;top:69px;font-size:12px;color:#0000ff;">Συστήματα</div>
<svg style="left:64px;top:67px" width="16" height="16"><use href="#i-sys"/></svg>
<div class="t" style="left:57px;top:85px;font-size:12px;color:#0000ff;letter-spacing:-0.53px;">Κτίριο-1</div>
<svg style="left:36px;top:83px" width="16" height="16"><use href="#i-home"/></svg>
<svg style="left:27px;top:88px" width="6" height="6"><path d="M5.500 .5v5h-5z" fill="#404040" stroke="#262626" stroke-width=".8"/></svg>
<div class="t" style="left:71px;top:101px;font-size:12px;color:#0000ff;letter-spacing:-1.01px;">Ζώνη-1</div>
<svg style="left:50px;top:99px" width="16" height="16"><use href="#i-zone"/></svg>
<svg style="left:41px;top:104px" width="6" height="6"><path d="M5.500 .5v5h-5z" fill="#404040" stroke="#262626" stroke-width=".8"/></svg>
<div class="t" style="left:85px;top:117px;font-size:12px;color:#0000ff;letter-spacing:-0.41px;">Κέλυφος</div>
<svg style="left:64px;top:115px" width="16" height="16"><use href="#i-shell"/></svg>
<div class="t" style="left:85px;top:133px;font-size:12px;color:#0000ff;">Συστήματα</div>
<svg style="left:64px;top:131px" width="16" height="16"><use href="#i-sys"/></svg>
<div style="left:29px;top:36px;width:1px;height:46px;background:repeating-linear-gradient(#999 0 1px,transparent 1px 2px)"></div>
<div style="left:57px;top:52px;width:1px;height:24px;background:repeating-linear-gradient(#999 0 1px,transparent 1px 2px)"></div>
<div style="left:57px;top:59px;width:6px;height:1px;background:repeating-linear-gradient(90deg,#999 0 1px,transparent 1px 2px)"></div>
<div style="left:57px;top:75px;width:6px;height:1px;background:repeating-linear-gradient(90deg,#999 0 1px,transparent 1px 2px)"></div>
<div style="left:57px;top:116px;width:1px;height:24px;background:repeating-linear-gradient(#999 0 1px,transparent 1px 2px)"></div>
<div style="left:57px;top:123px;width:6px;height:1px;background:repeating-linear-gradient(90deg,#999 0 1px,transparent 1px 2px)"></div>
<div style="left:57px;top:139px;width:6px;height:1px;background:repeating-linear-gradient(90deg,#999 0 1px,transparent 1px 2px)"></div>
</div>
<div class="a" style="left:231px;top:80px;width:2px;height:792px;background:#a4a8ae"></div>
<div class="a" id="mdi" style="left:233px;top:80px;width:1358px;height:792px;background:linear-gradient(90deg,#d4805c 0%,#ffffff 100%)">
<svg style="left:79px;top:753px" width="1270" height="39" viewBox="0 0 1270 39"><defs><linearGradient id="gbig" gradientUnits="userSpaceOnUse" x1="0" y1="0" x2="1263" y2="0"><stop offset="0" stop-color="#fff" stop-opacity=".95"/><stop offset=".35" stop-color="#fff" stop-opacity=".55"/><stop offset=".5" stop-color="#fff" stop-opacity=".0"/><stop offset="1" stop-color="#fff" stop-opacity="0"/></linearGradient><linearGradient id="gbigs" gradientUnits="userSpaceOnUse" x1="0" y1="0" x2="1263" y2="0"><stop offset="0" stop-color="#bbb" stop-opacity="0"/><stop offset=".4" stop-color="#b0a8a4" stop-opacity=".3"/><stop offset=".55" stop-color="#a8a4a0" stop-opacity=".9"/><stop offset="1" stop-color="#b4b0ac" stop-opacity=".9"/></linearGradient></defs><text x="0" y="30.500" font-family="Liberation Sans,sans-serif" font-size="35" textLength="581" lengthAdjust="spacingAndGlyphs" fill="url(#gbig)" stroke="url(#gbigs)" stroke-width=".5">ενεργειακή</text><text x="633" y="30.500" font-family="Liberation Sans,sans-serif" font-size="35" textLength="630" lengthAdjust="spacingAndGlyphs" fill="url(#gbig)" stroke="url(#gbigs)" stroke-width=".5">επιθεώρηση</text></svg>
<div style="left:1px;top:763px;width:57px;height:29px;border:1px solid #8a8a8a;border-radius:3px;background:linear-gradient(#fafafa,#e4e4e4)"><svg style="left:2px;top:2px" width="24" height="24"><use href="#i-house"/></svg><svg style="left:30px;top:2px" width="24" height="24"><use href="#i-cert"/></svg></div>
<div style="left:62px;top:763px;width:56px;height:29px;border:1px solid #8a8a8a;border-radius:3px;background:linear-gradient(#fafafa,#e4e4e4)"><svg style="left:2px;top:1px" width="24" height="24"><use href="#i-rgb"/></svg><svg style="left:28px;top:2px" width="24" height="24"><use href="#i-undo"/></svg></div>
<svg style="left:665px;top:762px" width="30" height="30"><use href="#i-redup"/></svg>
<div style="left:1329px;top:1px;width:29px;height:57px;border:1px solid #8a8a8a;border-radius:3px;background:linear-gradient(#fafafa,#e4e4e4)"><svg style="left:2px;top:1px" width="24" height="24"><use href="#i-rgb"/></svg><svg style="left:2px;top:28px" width="24" height="24"><use href="#i-undo"/></svg></div>
<div style="left:1329px;top:61px;width:29px;height:57px;border:1px solid #8a8a8a;border-radius:3px;background:linear-gradient(#fafafa,#e4e4e4)"><svg style="left:2px;top:2px" width="24" height="24"><use href="#i-house"/></svg><svg style="left:3px;top:29px" width="24" height="24"><use href="#i-cert"/></svg></div>
<svg style="left:1328px;top:376px" width="29" height="29"><use href="#i-redleft"/></svg>
<svg style="left:934px;top:680px" width="420" height="70" viewBox="0 0 420 70"><defs><radialGradient id="gbs" cx=".45" cy=".4" r=".6"><stop offset="0" stop-color="#efe4c4"/><stop offset=".7" stop-color="#c8b48a"/><stop offset="1" stop-color="#9a8660"/></radialGradient><linearGradient id="gring" x1="0" y1="0" x2="1" y2="1"><stop offset="0" stop-color="#f4ecec"/><stop offset=".5" stop-color="#8a6e66"/><stop offset="1" stop-color="#e8dcd8"/></linearGradient></defs><ellipse cx="42" cy="36" rx="40" ry="29" fill="url(#gring)" transform="rotate(-8 42 36)"/><ellipse cx="42" cy="36" rx="35" ry="24.500" fill="url(#gbs)" stroke="#6a5040" stroke-width="1" transform="rotate(-8 42 36)"/><text x="21" y="52" font-family="Liberation Serif,serif" font-size="44" fill="#6a6030" stroke="#4a4420" stroke-width=".5" textLength="26" lengthAdjust="spacingAndGlyphs">B</text><text x="48" y="52" font-family="Liberation Serif,serif" font-size="38" fill="#6a6030" textLength="20" lengthAdjust="spacingAndGlyphs">s</text><text x="92" y="51" font-family="Liberation Serif,serif" font-size="45" fill="#1212d6" stroke="#1212d6" stroke-width="1" textLength="313" lengthAdjust="spacingAndGlyphs">buildingsoft</text></svg>
</div>
<div class="a" style="left:1591px;top:81px;width:1px;height:792px;background:#222"></div>
<div class="a" style="left:8px;top:872px;width:1584px;height:1px;background:#333"></div>
<div class="a" id="child" style="left:236px;top:84px;width:1187px;height:615px;border:1px solid #2b2f36;border-radius:2px 2px 0 0;background:linear-gradient(90deg,#9a8c90 0%,#a49ca8 30%,#b4c0d6 65%,#d3e3f5 100%);box-shadow:0 3px 11px 3px rgba(0,0,0,.72),inset 0 0 0 1px rgba(255,255,255,.9)"></div>
<div class="a" style="left:238px;top:86px;width:1183px;height:21px;background:linear-gradient(90deg,#e6e0de 0%,#afa3a6 8%,rgba(164,156,168,0) 30%)"></div>
<div class="a" style="left:0;top:0;width:0;height:0"><div class="t" style="left:248px;top:91px;font-size:12.3px;color:#000;letter-spacing:0.05px;">Συστήματα ζώνης-1</div></div>
<div class="a" style="left:1400px;top:89px;width:17px;height:17px;border:1px solid #4a5560;border-radius:3px;background:linear-gradient(#f4b09a 0%,#ea8e74 48%,#c64e2a 52%,#e27c5c 100%);box-shadow:inset 0 0 0 1px rgba(255,255,255,.35)"><div class="t" style="left:4px;top:-1px;font-size:13px;font-weight:bold;color:#fff;text-shadow:0 0 1px #223,0 0 1px #223,0 0 1px #223">x</div></div>
<div class="a" id="dlg" style="left:242px;top:108px;width:1175px;height:585px;border:1px solid #111;background:#ffe4b5;box-shadow:0 0 0 1px #fff,inset 0 0 0 1px #fff6e4"></div>
<div class="a" id="page" style="left:252px;top:163px;width:1152px;height:519px;border:1px solid #898c95;background:#fff"></div>
<div class="a" id="dc" style="left:0;top:0;width:0;height:0">
<div class="cb" style="left:252px;top:121px"></div>
<div class="t" style="left:268px;top:121px;font-size:13.5px;color:#000;letter-spacing:-0.34px;">Ύγρανση</div>
<div class="cb" style="left:331px;top:121px"></div>
<div class="t" style="left:347px;top:121px;font-size:13.5px;color:#000;letter-spacing:-0.11px;">Μηχανικός αερισμός</div>
<div class="cb" style="left:483px;top:121px"></div>
<div class="t" style="left:499px;top:121px;font-size:13.5px;color:#000;letter-spacing:0.30px;">Ηλιακός συλλέκτης</div>
<div class="cb" style="left:627px;top:121px"></div>
<div class="t" style="left:644px;top:121px;font-size:13.5px;color:#000;letter-spacing:-0.32px;">Φωτισμός</div>
<div style="left:725px;top:116px;width:285px;height:23px;border:1px solid #000;border-radius:7px"></div>
<div class="t" style="left:730px;top:121px;font-size:13px;color:#0000ff;font-family:'Liberation Mono',monospace;letter-spacing:0.13px;">Χρήση Ζώνης-1:</div>
<div class="t" style="left:842px;top:121px;font-size:12px;color:#008000;letter-spacing:0.30px;">Μονοκατοικία,  πολυκατοικία</div>
<div style="left:1227px;top:116px;width:103px;height:22px;border:1px solid #000;border-radius:7px"></div>
<div class="t" style="left:1232px;top:120px;font-size:13px;color:#0000ff;font-family:'Liberation Mono',monospace;">Κλιμ.Ζώνη:</div>
<div class="t" style="left:1314px;top:117px;font-size:18px;color:#ff0000;font-weight:bold;letter-spacing:-0.83px;">Γ</div>
<div style="left:254px;top:144px;width:91px;height:20px;border:1px solid #898c95;border-bottom:none;background:linear-gradient(#f2f2f2 0%,#ebebeb 50%,#dddddd 50%,#cfcfcf 100%)"></div>
<div style="left:407px;top:144px;width:57px;height:20px;border:1px solid #898c95;border-bottom:none;border-left:none;background:linear-gradient(#f2f2f2 0%,#ebebeb 50%,#dddddd 50%,#cfcfcf 100%)"></div>
<div style="left:344px;top:142px;width:64px;height:22px;border:1px solid #898c95;border-bottom:none;background:#fff"></div>
<div class="t" style="left:268px;top:149px;font-size:13px;color:#000;font-family:'Liberation Mono',monospace;letter-spacing:0.20px;">Θέρμανση</div>
<div class="t" style="left:361px;top:147px;font-size:13px;color:#000;font-family:'Liberation Mono',monospace;letter-spacing:-0.05px;">Ψύξη</div>
<div class="t" style="left:421px;top:149px;font-size:13px;color:#000;font-family:'Liberation Mono',monospace;letter-spacing:-0.14px;">ΖΝΧ</div>
<div class="btn" style="left:257px;top:182px;width:100px;height:23px"></div>
<div class="t" style="left:263px;top:187px;font-size:12px;color:#000;letter-spacing:-0.06px;">TOTEE-20701-1</div>
<div class="btn" style="left:365px;top:182px;width:119px;height:23px"></div>
<div class="t" style="left:371px;top:186px;font-size:12.5px;color:#000;letter-spacing:-0.13px;">θεωρητικό σύστημα</div>
<div style="left:493px;top:182px;width:45px;height:23px;border:1px solid #c4d0e0;background:#fff;box-shadow:inset 1px 1px 0 #e4ecf4"></div>
<div class="t" style="left:496px;top:187px;font-size:12px;color:#000;letter-spacing:0.32px;">50</div>
<div style="left:521px;top:185px;width:14px;height:9px;border:1px solid #555;border-radius:2px;background:linear-gradient(#fff,#ccc)"><svg style="left:2px;top:1px" width="8" height="5"><path d="M0 5L4 0l4 5z" fill="#000"/></svg></div>
<div style="left:521px;top:194px;width:14px;height:9px;border:1px solid #555;border-radius:2px;background:linear-gradient(#fff,#ccc)"><svg style="left:2px;top:1px" width="8" height="5"><path d="M0 0L4 5l4-5z" fill="#000"/></svg></div>
<div class="t" style="left:540px;top:187px;font-size:12.5px;color:#000;letter-spacing:0.88px;">%</div>
<div class="btn" style="left:559px;top:184px;width:22px;height:20px"><svg style="left:2px;top:1px" width="16" height="16"><use href="#i-tools"/></svg></div>
<div class="cb" style="left:586px;top:187px"></div>
<div class="t" style="left:602px;top:189px;font-size:11px;color:#000;letter-spacing:-0.19px;">προσωρ.απενεργ.αυτοματισμών</div>
<div class="t" style="left:256px;top:220px;font-size:12.3px;color:#ff0000;letter-spacing:-0.28px;">παραγωγή</div>
<div class="tbl" style="left:256px;top:239px;width:1073px;height:103px"><div style="left:1px;top:2px;width:1051px;height:18px;background:#ffe4b5"></div><div style="left:609px;top:21px;width:36px;height:79px;background:#fff8dc"></div><div style="left:646px;top:21px;width:36px;height:79px;background:#fff8dc"></div><div style="left:683px;top:21px;width:36px;height:79px;background:#fff8dc"></div><div style="left:720px;top:21px;width:36px;height:79px;background:#fff8dc"></div><div style="left:757px;top:21px;width:36px;height:79px;background:#fff8dc"></div><div style="left:942px;top:21px;width:36px;height:79px;background:#fff8dc"></div><div style="left:979px;top:21px;width:36px;height:79px;background:#fff8dc"></div><div style="left:1016px;top:21px;width:36px;height:79px;background:#fff8dc"></div><div style="left:21px;top:1px;width:2px;height:19px;background:linear-gradient(90deg,#000 50%,#fff 50%)"></div><div style="left:21px;top:21px;width:1px;height:79px;background:#b4b4b4"></div><div class="t" style="left:22px;top:5px;width:312px;text-align:center;font-size:11px;letter-spacing:0">Τύπος</div><div style="left:334px;top:1px;width:2px;height:19px;background:linear-gradient(90deg,#000 50%,#fff 50%)"></div><div style="left:334px;top:21px;width:1px;height:79px;background:#b4b4b4"></div><div class="t" style="left:335px;top:5px;width:134px;text-align:center;font-size:11px;letter-spacing:0">Πηγή ενέργειας</div><div style="left:469px;top:1px;width:2px;height:19px;background:linear-gradient(90deg,#000 50%,#fff 50%)"></div><div style="left:469px;top:21px;width:1px;height:79px;background:#b4b4b4"></div><div class="t" style="left:470px;top:5px;width:54px;text-align:center;font-size:11px;letter-spacing:0">Ισχύς(KW)</div><div style="left:524px;top:1px;width:2px;height:19px;background:linear-gradient(90deg,#000 50%,#fff 50%)"></div><div style="left:524px;top:21px;width:1px;height:79px;background:#b4b4b4"></div><div class="t" style="left:525px;top:5px;width:42px;text-align:center;font-size:11px;letter-spacing:0">Β.Απ(-)</div><div style="left:567px;top:1px;width:2px;height:19px;background:linear-gradient(90deg,#000 50%,#fff 50%)"></div><div style="left:567px;top:21px;width:1px;height:79px;background:#b4b4b4"></div><div class="t" style="left:568px;top:5px;width:40px;text-align:center;font-size:11px;letter-spacing:0">EER(-)</div><div style="left:608px;top:1px;width:2px;height:19px;background:linear-gradient(90deg,#000 50%,#fff 50%)"></div><div style="left:608px;top:21px;width:1px;height:79px;background:#b4b4b4"></div><div class="t" style="left:609px;top:5px;width:36px;text-align:center;font-size:11px;letter-spacing:0">Ιαν(-)</div><div style="left:645px;top:1px;width:2px;height:19px;background:linear-gradient(90deg,#000 50%,#fff 50%)"></div><div style="left:645px;top:21px;width:1px;height:79px;background:#b4b4b4"></div><div class="t" style="left:646px;top:5px;width:36px;text-align:center;font-size:11px;letter-spacing:0">Φεβ(-)</div><div style="left:682px;top:1px;width:2px;height:19px;background:linear-gradient(90deg,#000 50%,#fff 50%)"></div><div style="left:682px;top:21px;width:1px;height:79px;background:#b4b4b4"></div><div class="t" style="left:683px;top:5px;width:36px;text-align:center;font-size:11px;letter-spacing:0">Μαρ(-)</div><div style="left:719px;top:1px;width:2px;height:19px;background:linear-gradient(90deg,#000 50%,#fff 50%)"></div><div style="left:719px;top:21px;width:1px;height:79px;background:#b4b4b4"></div><div class="t" style="left:720px;top:5px;width:36px;text-align:center;font-size:11px;letter-spacing:0">Απρ(-)</div><div style="left:756px;top:1px;width:2px;height:19px;background:linear-gradient(90deg,#000 50%,#fff 50%)"></div><div style="left:756px;top:21px;width:1px;height:79px;background:#b4b4b4"></div><div class="t" style="left:757px;top:5px;width:36px;text-align:center;font-size:11px;letter-spacing:0">Μαι(-)</div><div style="left:793px;top:1px;width:2px;height:19px;background:linear-gradient(90deg,#000 50%,#fff 50%)"></div><div style="left:793px;top:21px;width:1px;height:79px;background:#b4b4b4"></div><div class="t" style="left:794px;top:5px;width:36px;text-align:center;font-size:11px;letter-spacing:0">Ιουν(-)</div><div style="left:830px;top:1px;width:2px;height:19px;background:linear-gradient(90deg,#000 50%,#fff 50%)"></div><div style="left:830px;top:21px;width:1px;height:79px;background:#b4b4b4"></div><div class="t" style="left:831px;top:5px;width:36px;text-align:center;font-size:11px;letter-spacing:0">Ιουλ(-)</div><div style="left:867px;top:1px;width:2px;height:19px;background:linear-gradient(90deg,#000 50%,#fff 50%)"></div><div style="left:867px;top:21px;width:1px;height:79px;background:#b4b4b4"></div><div class="t" style="left:868px;top:5px;width:36px;text-align:center;font-size:11px;letter-spacing:0">Αυγ(-)</div><div style="left:904px;top:1px;width:2px;height:19px;background:linear-gradient(90deg,#000 50%,#fff 50%)"></div><div style="left:904px;top:21px;width:1px;height:79px;background:#b4b4b4"></div><div class="t" style="left:905px;top:5px;width:36px;text-align:center;font-size:11px;letter-spacing:0">Σεπ(-)</div><div style="left:941px;top:1px;width:2px;height:19px;background:linear-gradient(90deg,#000 50%,#fff 50%)"></div><div style="left:941px;top:21px;width:1px;height:79px;background:#b4b4b4"></div><div class="t" style="left:942px;top:5px;width:36px;text-align:center;font-size:11px;letter-spacing:0">Οκτ(-)</div><div style="left:978px;top:1px;width:2px;height:19px;background:linear-gradient(90deg,#000 50%,#fff 50%)"></div><div style="left:978px;top:21px;width:1px;height:79px;background:#b4b4b4"></div><div class="t" style="left:979px;top:5px;width:36px;text-align:center;font-size:11px;letter-spacing:0">Νοε(-)</div><div style="left:1015px;top:1px;width:2px;height:19px;background:linear-gradient(90deg,#000 50%,#fff 50%)"></div><div style="left:1015px;top:21px;width:1px;height:79px;background:#b4b4b4"></div><div class="t" style="left:1016px;top:5px;width:36px;text-align:center;font-size:11px;letter-spacing:0">Δεκ(-)</div><div style="left:1052px;top:1px;width:2px;height:19px;background:linear-gradient(90deg,#000 50%,#fff 50%)"></div><div style="left:1052px;top:21px;width:1px;height:79px;background:#b4b4b4"></div><div style="left:1px;top:20px;width:1052px;height:1px;background:#000"></div><div style="left:1px;top:40px;width:1052px;height:1px;background:#b4b4b4"></div><div style="left:1px;top:21px;width:20px;height:19px;background:#3399ff"></div><div class="t" style="left:1px;top:25px;width:20px;text-align:center;font-size:11px;color:#fff">1</div><div class="t" style="left:22px;top:25px;width:312px;text-align:center;font-size:11px;letter-spacing:0">Αερόψυκτη Α.Θ.</div><div class="t" style="left:335px;top:25px;width:134px;text-align:center;font-size:11px;letter-spacing:0">Ηλεκτρισμός</div><div class="t" style="left:470px;top:25px;width:54px;text-align:center;font-size:11px;letter-spacing:0">0</div><div class="t" style="left:525px;top:25px;width:42px;text-align:center;font-size:11px;letter-spacing:0">1.00</div><div class="t" style="left:568px;top:25px;width:40px;text-align:center;font-size:11px;letter-spacing:0">3.00</div><div class="t" style="left:609px;top:25px;width:36px;text-align:center;font-size:11px;letter-spacing:0">0</div><div class="t" style="left:646px;top:25px;width:36px;text-align:center;font-size:11px;letter-spacing:0">0</div><div class="t" style="left:683px;top:25px;width:36px;text-align:center;font-size:11px;letter-spacing:0">0</div><div class="t" style="left:720px;top:25px;width:36px;text-align:center;font-size:11px;letter-spacing:0">0</div><div class="t" style="left:757px;top:25px;width:36px;text-align:center;font-size:11px;letter-spacing:0">0</div><div class="t" style="left:794px;top:25px;width:36px;text-align:center;font-size:11px;letter-spacing:0">0.5</div><div class="t" style="left:831px;top:25px;width:36px;text-align:center;font-size:11px;letter-spacing:0">0.5</div><div class="t" style="left:868px;top:25px;width:36px;text-align:center;font-size:11px;letter-spacing:0">0.5</div><div class="t" style="left:905px;top:25px;width:36px;text-align:center;font-size:11px;letter-spacing:0">0.5</div><div class="t" style="left:942px;top:25px;width:36px;text-align:center;font-size:11px;letter-spacing:0">0</div><div class="t" style="left:979px;top:25px;width:36px;text-align:center;font-size:11px;letter-spacing:0">0</div><div class="t" style="left:1016px;top:25px;width:36px;text-align:center;font-size:11px;letter-spacing:0">0</div><div style="left:1px;top:60px;width:1052px;height:1px;background:#b4b4b4"></div><div style="left:1px;top:80px;width:1052px;height:1px;background:#b4b4b4"></div><div style="left:1054px;top:2px;width:16px;height:98px;background:#f0f0f0"></div><svg style="left:1058px;top:8px" width="7" height="4"><path d="M0 4L3.500 0 7 4z" fill="#404040"/></svg><svg style="left:1058px;top:90px" width="7" height="4"><path d="M0 0L3.500 4 7 0z" fill="#404040"/></svg><div style="left:1055px;top:19px;width:14px;height:15px;border:1px solid #979797;border-radius:2px;background:linear-gradient(90deg,#f6f6f6 20%,#d4d4d4)"></div></div>
<div class="t" style="left:256px;top:359px;font-size:12.3px;color:#ff0000;letter-spacing:0.17px;">Δίκτυο διανομής</div>
<div class="cbd" style="left:356px;top:359px"><svg style="left:1px;top:1px" width="9" height="9" viewBox="0 0 9 9"><path d="M1 4.500l2.500 3L8 1" fill="none" stroke="#b4b4b4" stroke-width="1.700"/></svg></div>
<div class="t" style="left:372px;top:360px;font-size:11px;color:#8c8c8c;letter-spacing:-0.27px;">αυτόματη συμπλήρωση</div>
<div class="cbd" style="left:491px;top:359px"><svg style="left:1px;top:1px" width="9" height="9" viewBox="0 0 9 9"><path d="M1 4.500l2.500 3L8 1" fill="none" stroke="#b4b4b4" stroke-width="1.700"/></svg></div>
<div class="t" style="left:507px;top:360px;font-size:11px;color:#8c8c8c;letter-spacing:-0.19px;">αυτόματος υπολογισμός απωλειών</div>
<div class="cbd" style="left:676px;top:359px"><svg style="left:1px;top:1px" width="9" height="9" viewBox="0 0 9 9"><path d="M1 4.500l2.500 3L8 1" fill="none" stroke="#b4b4b4" stroke-width="1.700"/></svg></div>
<div class="t" style="left:692px;top:360px;font-size:11px;color:#8c8c8c;letter-spacing:-0.20px;">ισχύς ίση με της παραγωγής</div>
<div class="tbl" style="left:256px;top:377px;width:575px;height:63px"><div style="left:1px;top:2px;width:571px;height:18px;background:#ffe4b5"></div><div style="left:22px;top:21px;width:180px;height:19px;background:#fff8dc"></div><div style="left:522px;top:21px;width:50px;height:19px;background:#fff8dc"></div><div style="left:22px;top:41px;width:180px;height:19px;background:#fff8dc"></div><div style="left:203px;top:41px;width:54px;height:19px;background:#fff8dc"></div><div style="left:479px;top:41px;width:42px;height:19px;background:#fff8dc"></div><div style="left:21px;top:1px;width:2px;height:19px;background:linear-gradient(90deg,#000 50%,#fff 50%)"></div><div style="left:21px;top:21px;width:1px;height:39px;background:#b4b4b4"></div><div class="t" style="left:22px;top:5px;width:180px;text-align:center;font-size:11px;letter-spacing:0">Τύπος</div><div style="left:202px;top:1px;width:2px;height:19px;background:linear-gradient(90deg,#000 50%,#fff 50%)"></div><div style="left:202px;top:21px;width:1px;height:39px;background:#b4b4b4"></div><div class="t" style="left:203px;top:5px;width:54px;text-align:center;font-size:11px;letter-spacing:0">Ισχύς(KW)</div><div style="left:257px;top:1px;width:2px;height:19px;background:linear-gradient(90deg,#000 50%,#fff 50%)"></div><div style="left:257px;top:21px;width:1px;height:39px;background:#b4b4b4"></div><div class="t" style="left:258px;top:5px;width:220px;text-align:center;font-size:11px;letter-spacing:0">Χώρος διέλευσης</div><div style="left:478px;top:1px;width:2px;height:19px;background:linear-gradient(90deg,#000 50%,#fff 50%)"></div><div style="left:478px;top:21px;width:1px;height:39px;background:#b4b4b4"></div><div class="t" style="left:479px;top:5px;width:42px;text-align:center;font-size:11px;letter-spacing:0">Β.Απ(-)</div><div style="left:521px;top:1px;width:2px;height:19px;background:linear-gradient(90deg,#000 50%,#fff 50%)"></div><div style="left:521px;top:21px;width:1px;height:39px;background:#b4b4b4"></div><div class="t" style="left:522px;top:5px;width:50px;text-align:center;font-size:11px;letter-spacing:0">Μόνωση</div><div style="left:572px;top:21px;width:1px;height:39px;background:#b4b4b4"></div><div style="left:1px;top:20px;width:572px;height:1px;background:#000"></div><div style="left:1px;top:40px;width:572px;height:1px;background:#b4b4b4"></div><div style="left:1px;top:21px;width:20px;height:19px;background:#3399ff"></div><div class="t" style="left:1px;top:25px;width:20px;text-align:center;font-size:11px;color:#fff">1</div><div class="t" style="left:22px;top:25px;width:180px;text-align:center;font-size:11px;letter-spacing:0">Δίκτυο διανομής ψυχρού μέσου</div><div class="t" style="left:203px;top:25px;width:54px;text-align:center;font-size:11px;letter-spacing:0">0</div><div class="t" style="left:258px;top:25px;width:220px;text-align:center;font-size:11px;letter-spacing:0">Εσωτερικοί  ή έως και 20% σε εξωτερικούς</div><div class="t" style="left:479px;top:25px;width:42px;text-align:center;font-size:11px;letter-spacing:0">1.00</div><div class="t" style="left:1px;top:45px;width:20px;text-align:center;font-size:11px;color:#000">2</div><div class="t" style="left:22px;top:45px;width:180px;text-align:center;font-size:11px;letter-spacing:0">Αεραγωγοί</div></div>
<div class="cb" style="left:799px;top:402px"></div>
<div class="cb" style="left:799px;top:422px"></div>
<svg style="left:834px;top:399px" width="17" height="17"><use href="#i-go"/></svg>
<div class="t" style="left:256px;top:457px;font-size:12.3px;color:#ff0000;letter-spacing:0.29px;">Τερματικές μονάδες</div>
<div class="cb" style="left:376px;top:456px"><svg style="left:1px;top:1px" width="9" height="9" viewBox="0 0 9 9"><path d="M1 4.500l2.500 3L8 1" fill="none" stroke="#1c3fa0" stroke-width="1.700"/></svg></div>
<div class="t" style="left:392px;top:458px;font-size:11px;color:#000;letter-spacing:-0.27px;">αυτόματη συμπλήρωση</div>
<div class="tbl" style="left:256px;top:475px;width:248px;height:42px"><div style="left:1px;top:2px;width:243px;height:18px;background:#ffe4b5"></div><div style="left:21px;top:1px;width:2px;height:19px;background:linear-gradient(90deg,#000 50%,#fff 50%)"></div><div style="left:21px;top:21px;width:1px;height:19px;background:#b4b4b4"></div><div class="t" style="left:22px;top:5px;width:180px;text-align:center;font-size:11px;letter-spacing:0">Τύπος</div><div style="left:202px;top:1px;width:2px;height:19px;background:linear-gradient(90deg,#000 50%,#fff 50%)"></div><div style="left:202px;top:21px;width:1px;height:19px;background:#b4b4b4"></div><div class="t" style="left:203px;top:5px;width:41px;text-align:center;font-size:11px;letter-spacing:0">Β.Απ(-)</div><div style="left:244px;top:21px;width:1px;height:19px;background:#b4b4b4"></div><div style="left:1px;top:20px;width:244px;height:1px;background:#000"></div><div style="left:1px;top:21px;width:20px;height:19px;background:#3399ff"></div><div class="t" style="left:1px;top:25px;width:20px;text-align:center;font-size:11px;color:#fff">1</div><div class="t" style="left:203px;top:25px;width:41px;text-align:center;font-size:11px;letter-spacing:0">0.93</div></div>
<svg style="left:507px;top:499px" width="17" height="17"><use href="#i-go"/></svg>
<div class="cb" style="left:528px;top:502px"><svg style="left:1px;top:1px" width="9" height="9" viewBox="0 0 9 9"><path d="M1 4.500l2.500 3L8 1" fill="none" stroke="#1c3fa0" stroke-width="1.700"/></svg></div>
<div class="t" style="left:544px;top:503px;font-size:11px;color:#000;letter-spacing:-0.17px;">αυτόματος Β.Απ.</div>
<div class="t" style="left:256px;top:534px;font-size:12.3px;color:#ff0000;letter-spacing:0.14px;">Βοηθητικές μονάδες</div>
<div class="cb" style="left:376px;top:533px"><svg style="left:1px;top:1px" width="9" height="9" viewBox="0 0 9 9"><path d="M1 4.500l2.500 3L8 1" fill="none" stroke="#1c3fa0" stroke-width="1.700"/></svg></div>
<div class="t" style="left:392px;top:535px;font-size:11px;color:#000;letter-spacing:-0.27px;">αυτόματη συμπλήρωση</div>
<div class="tbl" style="left:256px;top:552px;width:324px;height:103px"><div style="left:1px;top:2px;width:302px;height:18px;background:#ffe4b5"></div><div style="left:21px;top:1px;width:2px;height:19px;background:linear-gradient(90deg,#000 50%,#fff 50%)"></div><div style="left:21px;top:21px;width:1px;height:79px;background:#b4b4b4"></div><div class="t" style="left:22px;top:5px;width:180px;text-align:center;font-size:11px;letter-spacing:0">Τύπος</div><div style="left:202px;top:1px;width:2px;height:19px;background:linear-gradient(90deg,#000 50%,#fff 50%)"></div><div style="left:202px;top:21px;width:1px;height:79px;background:#b4b4b4"></div><div class="t" style="left:203px;top:5px;width:45px;text-align:center;font-size:11px;letter-spacing:0">Αρ(-)</div><div style="left:248px;top:1px;width:2px;height:19px;background:linear-gradient(90deg,#000 50%,#fff 50%)"></div><div style="left:248px;top:21px;width:1px;height:79px;background:#b4b4b4"></div><div class="t" style="left:249px;top:5px;width:54px;text-align:center;font-size:11px;letter-spacing:0">Ισχύς(KW)</div><div style="left:303px;top:1px;width:2px;height:19px;background:linear-gradient(90deg,#000 50%,#fff 50%)"></div><div style="left:303px;top:21px;width:1px;height:79px;background:#b4b4b4"></div><div style="left:1px;top:20px;width:303px;height:1px;background:#000"></div><div style="left:1px;top:40px;width:303px;height:1px;background:#b4b4b4"></div><div style="left:1px;top:21px;width:20px;height:19px;background:#3399ff"></div><div style="left:1px;top:60px;width:303px;height:1px;background:#b4b4b4"></div><div style="left:1px;top:80px;width:303px;height:1px;background:#b4b4b4"></div><div style="left:305px;top:2px;width:16px;height:98px;background:#f0f0f0"></div><svg style="left:309px;top:8px" width="7" height="4"><path d="M0 4L3.500 0 7 4z" fill="#404040"/></svg><svg style="left:309px;top:90px" width="7" height="4"><path d="M0 0L3.500 4 7 0z" fill="#404040"/></svg><div style="left:306px;top:19px;width:14px;height:15px;border:1px solid #979797;border-radius:2px;background:linear-gradient(90deg,#f6f6f6 20%,#d4d4d4)"></div></div>
</div>
<svg class="a" style="left:920px;top:420px" width="290" height="240" viewBox="0 0 290 240"><defs><pattern id="grl" width="6" height="3.200" patternUnits="userSpaceOnUse" patternTransform="skewY(5.500)"><rect width="6" height="3.200" fill="none"/><rect y="0" width="6" height="1.100" fill="#cbc9be"/><rect x="0" width=".8" height="3.200" fill="#c0beb2"/></pattern><radialGradient id="gfan" cx=".5" cy=".5" r=".5"><stop offset="0" stop-color="#2c2c2c"/><stop offset=".85" stop-color="#3c3c3a"/><stop offset="1" stop-color="#5a5a56"/></radialGradient><linearGradient id="gside" x1="0" y1="0" x2="1" y2="0"><stop offset="0" stop-color="#b4b2a6"/><stop offset="1" stop-color="#9a988c"/></linearGradient><filter id="blr"><feGaussianBlur stdDeviation=".6"/></filter></defs><g filter="url(#blr)"><polygon points="16.0,165.8 257.2,209.2 269.2,201.2 269.2,210.6 257.2,226.5 210.6,218.6 210.6,210.6 226.5,213.2 226.5,206.6 58.6,177.2 58.6,183.9 45.3,181.2 45.3,175.9 24.0,171.9 20.0,183.9 16.0,181.2" fill="#d0cfc6"/><polygon points="16.0,170.6 257.2,213.2 257.2,226.5 207.9,217.2 207.9,211.9 61.3,183.9 21.3,177.2" fill="#b8b6aa"/><polygon points="16.0,165.8 257.2,208.4 257.2,213.2 16.0,170.6" fill="#dcdbd2"/><polygon points="46.6,176.4 59.2,178.6 59.2,183.9 46.6,181.8" fill="#fff"/><polygon points="207.9,211.9 226.5,214.8 226.5,207.9 207.9,205.2" fill="#fff"/><polygon points="18.7,14.7 44.0,9.6 267.9,24.8 257.2,33.6" fill="#d6d4ca"/><polygon points="257.2,33.6 267.9,24.8 269.7,199.9 257.2,207.4" fill="url(#gside)"/><polygon points="18.7,14.7 178.0,31.4 178.0,190.8 18.7,165.8" fill="#c6c4b8"/><polygon points="178.0,31.4 257.2,33.6 257.2,207.4 178.0,190.8" fill="#cdcbc0"/><polyline points="178.0,31.4 178.0,190.8" fill="none" stroke="#9c9a8e" stroke-width=".8"/><polyline points="18.7,15.2 178.0,32.0 257.2,34.1" fill="none" stroke="#e4e2da" stroke-width=".8"/><polygon points="26.7,40.0 124.7,49.3 124.7,163.1 26.7,147.9" fill="#a8a69a"/><ellipse cx="77.3" cy="99.9" rx="46" ry="53" fill="url(#gfan)" transform="rotate(6 77.3 99.9)"/><polygon points="26.7,40.0 124.7,49.3 124.7,163.1 26.7,147.9" fill="url(#grl)"/><polygon points="26.7,40.0 124.7,49.3 124.7,163.1 26.7,147.9" fill="none" stroke="#d8d6cc" stroke-width="1.200"/><polyline points="128.5,80.0 177.2,85.8" fill="none" stroke="#dedcd2" stroke-width="1"/><polyline points="128.5,81.3 177.2,87.2" fill="none" stroke="#aeac9f" stroke-width=".7"/><polyline points="128.5,93.8 177.2,99.7" fill="none" stroke="#dedcd2" stroke-width="1"/><polyline points="128.5,95.1 177.2,101.0" fill="none" stroke="#aeac9f" stroke-width=".7"/><polyline points="128.5,107.7 177.2,113.5" fill="none" stroke="#dedcd2" stroke-width="1"/><polyline points="128.5,109.0 177.2,114.9" fill="none" stroke="#aeac9f" stroke-width=".7"/><polyline points="128.5,121.5 177.2,127.4" fill="none" stroke="#dedcd2" stroke-width="1"/><polyline points="128.5,122.9 177.2,128.7" fill="none" stroke="#aeac9f" stroke-width=".7"/><polyline points="128.5,135.4 177.2,141.3" fill="none" stroke="#dedcd2" stroke-width="1"/><polyline points="128.5,136.7 177.2,142.6" fill="none" stroke="#aeac9f" stroke-width=".7"/><polyline points="128.5,149.3 177.2,155.1" fill="none" stroke="#dedcd2" stroke-width="1"/><polyline points="128.5,150.6 177.2,156.4" fill="none" stroke="#aeac9f" stroke-width=".7"/><polyline points="128.5,163.1 177.2,169.0" fill="none" stroke="#dedcd2" stroke-width="1"/><polyline points="128.5,164.4 177.2,170.3" fill="none" stroke="#aeac9f" stroke-width=".7"/><polygon points="134.6,56.5 141.3,57.0 134.6,65.3" fill="#111"/><polygon points="141.3,57.0 145.3,57.3 137.3,66.1 134.6,65.3" fill="#3aa0e0"/><polyline points="132.7,72.0 149.3,73.6" fill="none" stroke="#5ab0e0" stroke-width=".8"/></g></svg>
<div class="a" style="left:1230px;top:596px;width:169px;height:80px;background:linear-gradient(90deg,#c9663f 0%,#dc9c80 35%,#f0d4c6 68%,#ffffff 98%)"><svg style="left:0;top:0" width="169" height="80" viewBox="0 0 169 80"><defs><linearGradient id="gen" x1="0" y1="0" x2="1" y2="0"><stop offset="0" stop-color="#b0683c"/><stop offset=".5" stop-color="#c09070"/><stop offset="1" stop-color="#f4ece6"/></linearGradient></defs><text x="5" y="57" font-family="Liberation Serif,serif" font-size="72" fill="#f01010" stroke="#4a0000" stroke-width=".9" textLength="21" lengthAdjust="spacingAndGlyphs">G</text><text x="29.500" y="57" font-family="Liberation Serif,serif" font-size="44" fill="#f01010" stroke="#4a0000" stroke-width=".9" textLength="13" lengthAdjust="spacingAndGlyphs">0</text><text x="44" y="54" font-family="Liberation Serif,serif" font-size="31" font-weight="bold" fill="url(#gen)" stroke="#2a2018" stroke-width=".7" textLength="120" lengthAdjust="spacingAndGlyphs">Energy</text><circle cx="99" cy="71.500" r="5.200" fill="#f4b090" stroke="#5a3a30" stroke-width=".9"/><text x="95.800" y="75" font-family="Liberation Sans,sans-serif" font-size="10" font-weight="bold" fill="#1a10d0">c</text><text x="107.500" y="75.700" font-family="Liberation Sans,sans-serif" font-size="12" fill="#1408d8" textLength="60.500" lengthAdjust="spacingAndGlyphs">buildingsoft</text></svg></div>
<div class="a" id="status" style="left:8px;top:873px;width:1584px;height:20px;background:#c5d4f0;border-top:3px solid #f6f6f6"><div class="t" style="left:4px;top:2px;font-size:11.3px;color:#0000ff;letter-spacing:-0.33px;">WWW.BUILDINGSOFT.GR - Λογισμικό ενεργειακής επιθεώρησης [ GoEnergy v1.6.2.4 r16 ]  -  ΧΡΗΣΤΗΣ : ΓΕΩΡΓΙΟΣ ΠΟΤΟΓΛΟΥ - ΠΟΛΙΤΙΚΟΣ ΜΗΧΑΝΙΚΟΣ - S/N SPKXCWR6D8180573 - product key : 524U-6C55-7W34-L141 - (AS)</div></div>
<svg class="a" style="left:1578px;top:880px" width="13" height="12"><g fill="#f8f8ff"><rect x="9" y="1" width="2" height="2"/><rect x="5" y="5" width="2" height="2"/><rect x="9" y="5" width="2" height="2"/><rect x="1" y="9" width="2" height="2"/><rect x="5" y="9" width="2" height="2"/><rect x="9" y="9" width="2" height="2"/></g><g fill="#8a94b0"><rect x="8" y="0" width="2" height="2"/><rect x="4" y="4" width="2" height="2"/><rect x="8" y="4" width="2" height="2"/><rect x="0" y="8" width="2" height="2"/><rect x="4" y="8" width="2" height="2"/><rect x="8" y="8" width="2" height="2"/></g></svg>
</body></html>
